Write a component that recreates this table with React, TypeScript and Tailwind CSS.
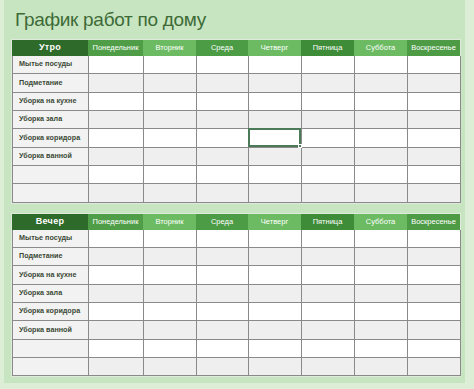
import React from 'react';

const days = [
  { name: 'Понедельник', bg: 'bg-[#4f9e47]' },
  { name: 'Вторник', bg: 'bg-[#6cbb63]' },
  { name: 'Среда', bg: 'bg-[#4c9b45]' },
  { name: 'Четверг', bg: 'bg-[#6cbb63]' },
  { name: 'Пятница', bg: 'bg-[#3e8c38]' },
  { name: 'Суббота', bg: 'bg-[#6cbb63]' },
  { name: 'Воскресенье', bg: 'bg-[#4d9b45]' },
];

const tasks = [
  'Мытье посуды',
  'Подметание',
  'Уборка на кухне',
  'Уборка зала',
  'Уборка коридора',
  'Уборка ванной',
  '',
  '',
];

const cols = 'grid grid-cols-[76px_55px_53px_52px_53px_53px_53px_53px]';

const Schedule = ({ title, selected }: { title: string; selected?: [number, number] }) => {
  return (
    <div className="w-[448px] ml-[8px] shadow-[0_0_0_1px_#dfe9dc]">
      <div className={`${cols} h-[16px] text-white`}>
        <div className="bg-[#2e6a2a] flex items-center justify-center text-[9px] font-bold tracking-[0.3px]">
          {title}
        </div>
        {days.map((d) => (
          <div key={d.name} className={`${d.bg} flex items-center justify-center text-[7.5px]`}>
            {d.name}
          </div>
        ))}
      </div>
      <div className="border-l border-[#8a8a8a]">
        {tasks.map((task, r) => (
          <div
            key={r}
            className={`${cols} h-[18.33px] ${r % 2 === 0 ? 'bg-white' : 'bg-[#efefef]'}`}
          >
            <div className="bg-[#f2f2f2] border-r border-b border-[#8a8a8a] flex items-center pl-[6px] text-[7.2px] font-bold text-[#3b4a36]">
              {task}
            </div>
            {days.map((d, c) => {
              const isSel = selected && selected[0] === r && selected[1] === c;
              return (
                <div key={d.name} className="relative border-r border-b border-[#8a8a8a]">
                  {isSel && (
                    <div className="absolute -left-[1px] -top-[1px] right-0 bottom-0 border-2 border-[#4b7a58]">
                      <div className="absolute -right-[3px] -bottom-[3px] w-[4px] h-[4px] bg-[#4b7a58] border border-white" />
                    </div>
                  )}
                </div>
              );
            })}
          </div>
        ))}
      </div>
    </div>
  );
};

export default function App() {
  return (
    <div className="w-[474px] h-[389px] bg-[#dcefd6] overflow-hidden font-['Liberation_Sans',Arial,sans-serif]">
      <div className="ml-[4px] w-[461px] h-[383px] bg-[#c8e5c1]">
        <div className="h-[40px] pt-[8px] pl-[11px] text-[19px] tracking-[-0.3px] leading-[24px] text-[#3d6b37]">
          График работ по дому
        </div>
        <Schedule title="Утро" selected={[4, 3]} />
        <div className="h-[11px]" />
        <Schedule title="Вечер" />
      </div>
    </div>
  );
}
